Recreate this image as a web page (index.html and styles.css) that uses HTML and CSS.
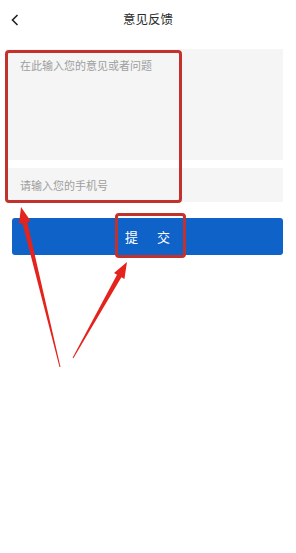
FILE: index.html
```html
<!DOCTYPE html>
<html lang="zh">

<head>
    <meta charset="UTF-8">
    <meta name="viewport" content="width=device-width, initial-scale=1.0">
    <title>意见反馈</title>
    <link rel="stylesheet" href="styles.css">
</head>

<body>
    <div class="page">
        <div class="header">
            <div class="back">
                <svg width="8" height="12" viewBox="0 0 8 12">
                    <polyline points="6.5,1 1.5,6 6.5,11" fill="none" stroke="#222" stroke-width="1.6" />
                </svg>
            </div>
            <div class="title">意见反馈</div>
            <div class="spacer"></div>
        </div>

        <div class="form">
            <div class="field content">在此输入您的意见或者问题</div>
            <div class="field phone">请输入您的手机号</div>
            <div class="submit">提交</div>
        </div>

        <!-- annotations -->
        <div class="mark markFields"></div>
        <div class="mark markBtn"></div>
        <svg class="arrows" width="296" height="553" viewBox="0 0 296 553">
            <polygon fill="#e4231d"
                points="21,207 30.6,221.1 27.2,221.9 60.5,366.9 59.5,367.1 22.4,223.1 19,223.9" />
            <polygon fill="#e4231d"
                points="127,262 124.4,278.9 121.4,277.2 73.4,358.2 72.6,357.8 117,274.8 114,273.1" />
        </svg>
    </div>
</body>

</html>
```

FILE: styles.css
```css
* {
    margin: 0;
    padding: 0;
    box-sizing: border-box;
}

body {
    background-color: #fff;
    font-family: "Noto Sans CJK SC", "Noto Sans", sans-serif;
}

.page {
    position: relative;
    width: 296px;
    height: 553px;
    overflow: hidden;
}

.header {
    height: 49px;
    display: grid;
    grid-template-columns: 40px 1fr 40px;
    align-items: start;
    padding-top: 10px;
}

.header .back {
    padding-left: 11px;
    padding-top: 4px;
}

.header .back svg {
    display: block;
}

.header .title {
    text-align: center;
    font-size: 12.5px;
    line-height: 18px;
    color: #2b2b2b;
}

.form {
    display: flex;
    flex-direction: column;
    padding: 0 13px 0 6px;
}

.field {
    background-color: #f5f5f5;
    font-size: 11px;
    color: #9e9e9e;
    padding-left: 14px;
}

.form .content {
    height: 111px;
    padding-top: 8px;
    line-height: 16px;
}

.form .phone {
    height: 34px;
    margin-top: 8px;
    line-height: 34px;
}

.form .submit {
    margin-top: 16px;
    margin-left: 6px;
    height: 37px;
    border-radius: 3px;
    background-color: #0f62c8;
    color: #fff;
    font-size: 13px;
    line-height: 37px;
    text-align: center;
    letter-spacing: 19px;
    text-indent: 19px;
}

.mark {
    position: absolute;
    border: 3px solid #c3312c;
    border-radius: 4px;
}

.markFields {
    left: 5px;
    top: 50px;
    width: 177px;
    height: 153px;
}

.markBtn {
    left: 115px;
    top: 213px;
    width: 71px;
    height: 45px;
}

.arrows {
    position: absolute;
    left: 0;
    top: 0;
}
```
